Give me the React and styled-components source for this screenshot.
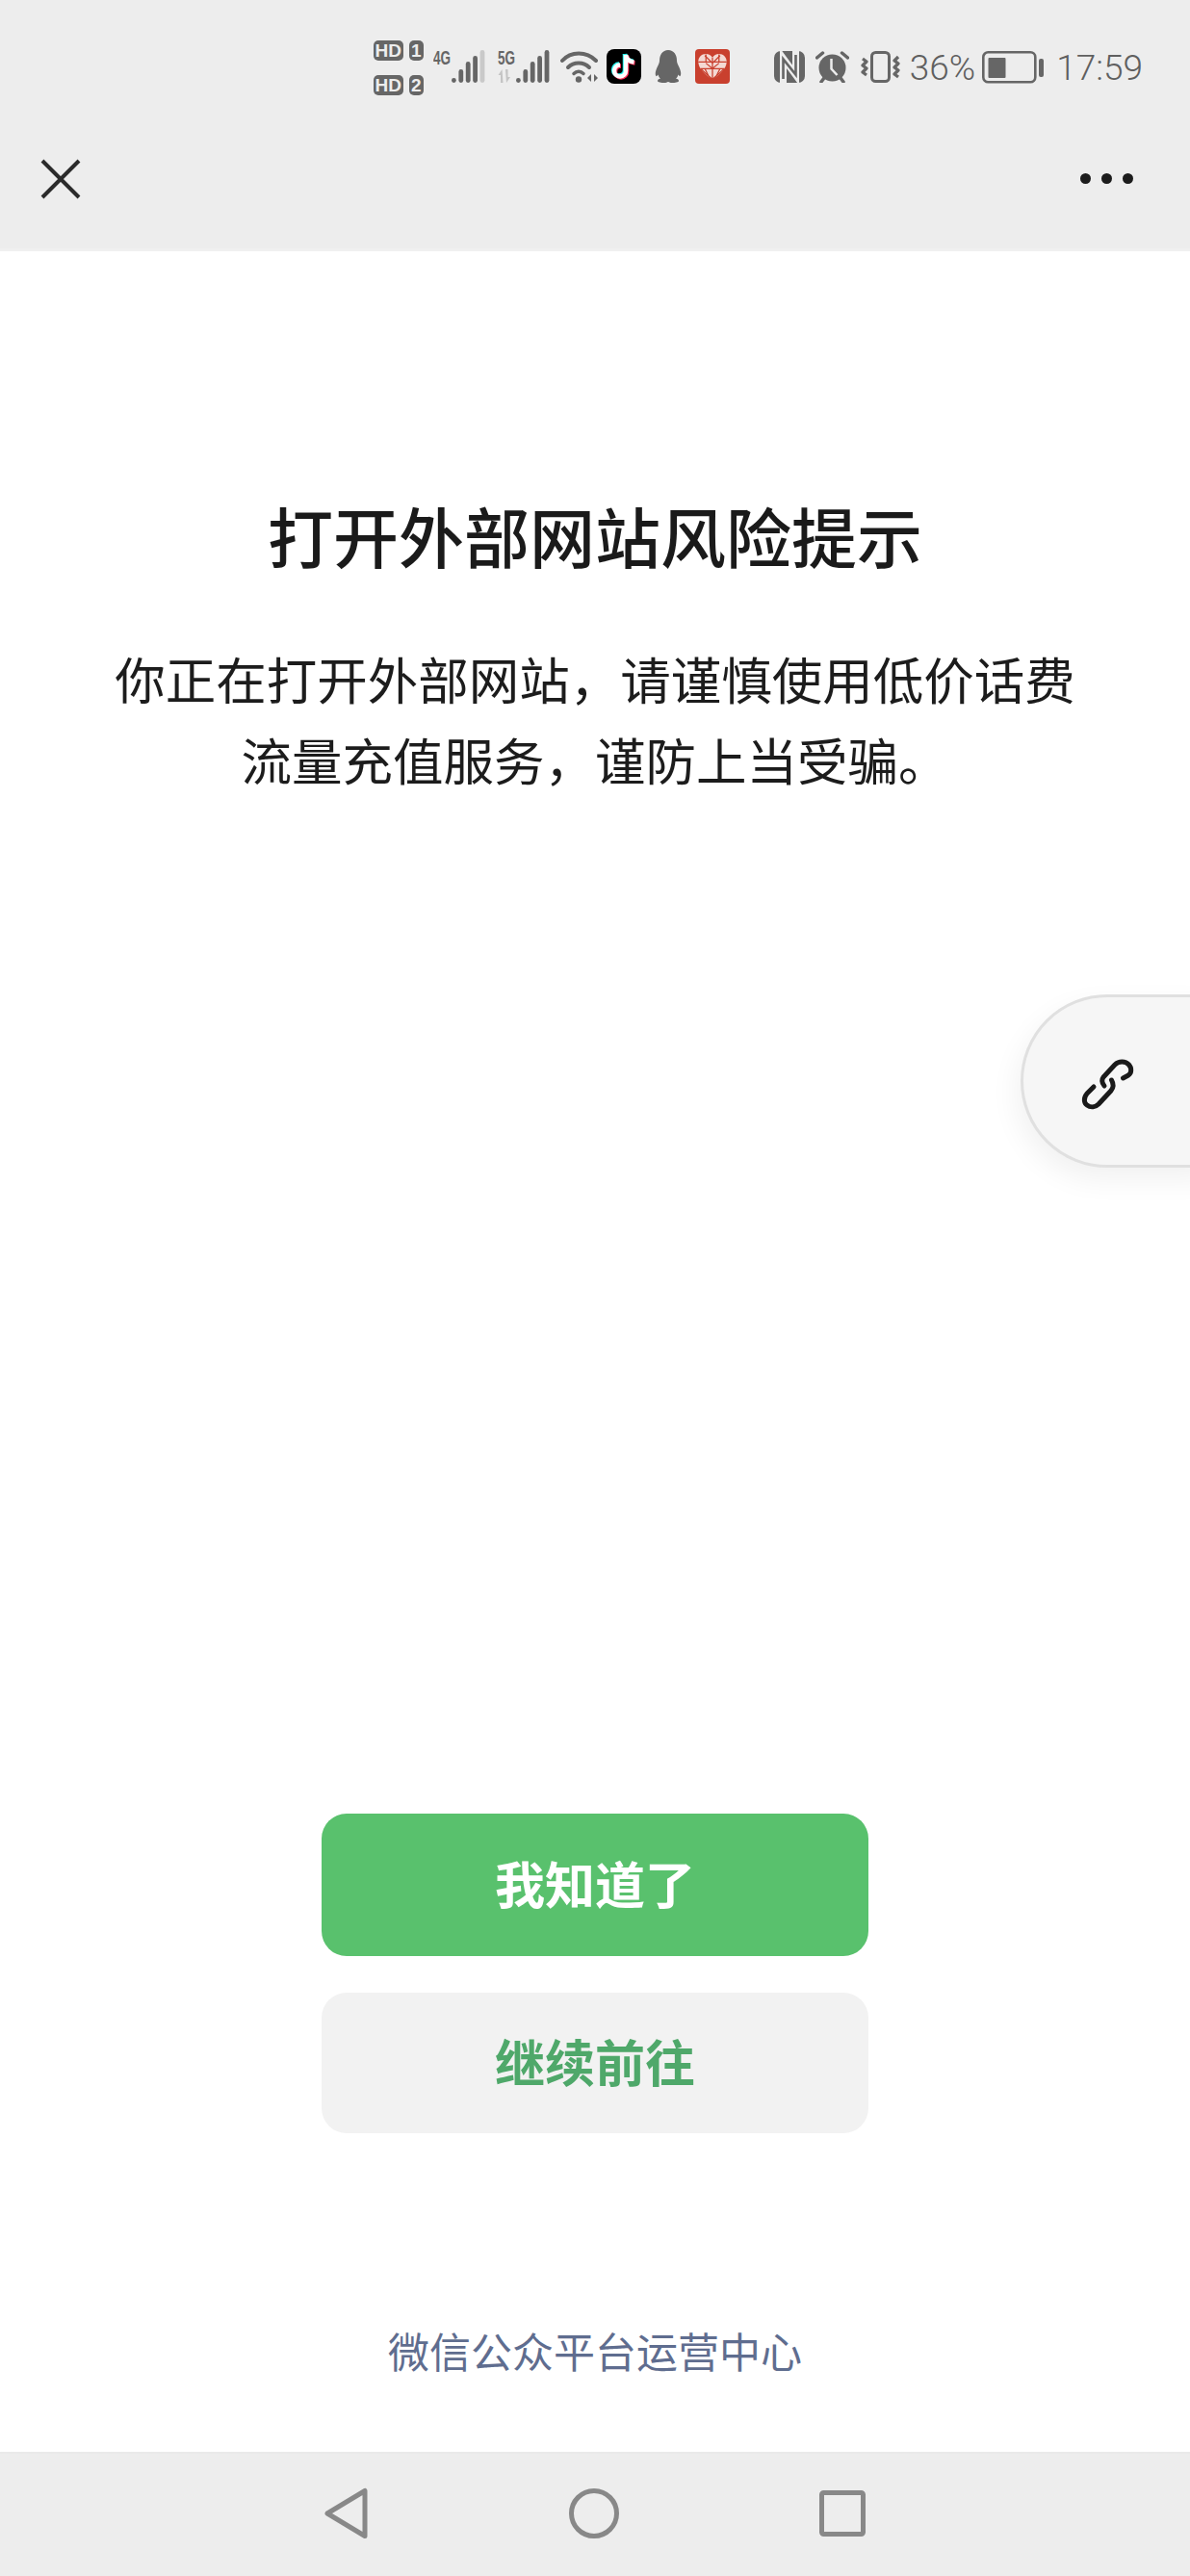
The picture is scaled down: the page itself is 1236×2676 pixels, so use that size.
import styled, { createGlobalStyle } from "styled-components";

const GlobalStyle = createGlobalStyle`
  html, body {
    margin: 0;
    padding: 0;
    background: #fff;
  }
  * {
    box-sizing: border-box;
  }
`;

const Page = styled.div`
  position: relative;
  width: 1236px;
  height: 2676px;
  display: flex;
  flex-direction: column;
  overflow: hidden;
  background: #fff;
  font-family: "Noto Sans CJK SC", "Noto Sans", sans-serif;
`;

const TopArea = styled.header`
  height: 261px;
  flex: none;
  display: flex;
  flex-direction: column;
  background: #ededed;
  border-bottom: 3px solid #f0f0f0;
`;

const StatusBar = styled.div`
  height: 100px;
  padding: 42px 49px 0 0;
  display: flex;
  justify-content: flex-end;
  align-items: flex-start;
  color: #5f5f5f;
`;

const StatusItem = styled.div`
  flex: none;
  display: flex;
  margin-left: ${(p) => p.$gap || 0}px;
  margin-top: ${(p) => p.$top || 0}px;
`;

const SimStack = styled.div`
  width: 52px;
  display: flex;
  flex-direction: column;
  gap: 15px;
`;

const SimRow = styled.div`
  display: flex;
  justify-content: space-between;
`;

const SimBadge = styled.span`
  height: 21px;
  width: ${(p) => p.$w}px;
  border-radius: 5px;
  background: #666;
  color: #ededed;
  font-family: "Liberation Sans", sans-serif;
  font-size: 19px;
  font-weight: 700;
  line-height: 21px;
  text-align: center;
`;

const StatusText = styled.span`
  font-family: Roboto, "Liberation Sans", sans-serif;
  font-size: 37px;
  font-weight: 300;
  line-height: 44px;
  margin-top: 7px;
  margin-left: ${(p) => p.$gap || 0}px;
  flex: none;
`;

const NavBar = styled.div`
  flex: 1;
  padding: 13px 59px 0 42px;
  display: flex;
  align-items: center;
  justify-content: space-between;
`;

const CloseButton = styled.svg`
  display: block;
`;

const MoreDots = styled.div`
  display: flex;
  gap: 11px;
`;

const Dot = styled.span`
  width: 11px;
  height: 11px;
  border-radius: 50%;
  background: #1c1c1c;
`;

const Main = styled.main`
  flex: 1;
  display: flex;
  flex-direction: column;
  align-items: center;
  padding: 250px 0 76px;
`;

const Title = styled.h1`
  margin: 0;
  font-size: 68px;
  font-weight: 500;
  line-height: 90px;
  color: #1a1a1a;
`;

const Message = styled.p`
  margin: 61px 0 0;
  width: 1010px;
  font-size: 52.5px;
  font-weight: 400;
  line-height: 84px;
  text-align: center;
  color: #1c1c1c;
`;

const Actions = styled.div`
  margin-top: auto;
  width: 568px;
  display: flex;
  flex-direction: column;
  gap: 38px;
`;

const ActionButton = styled.button`
  height: ${(p) => (p.$primary ? 148 : 146)}px;
  padding: 0 0 6px;
  border: 0;
  border-radius: 26px;
  background: ${(p) => (p.$primary ? "#59c16d" : "#f2f2f2")};
  color: ${(p) => (p.$primary ? "#fff" : "#4fa86a")};
  font-family: inherit;
  font-size: 52px;
  font-weight: 700;
`;

const Footer = styled.div`
  margin-top: 195px;
  font-size: 43px;
  line-height: 60px;
  color: #5f6d8f;
`;

const BottomBar = styled.nav`
  height: 129px;
  flex: none;
  padding-bottom: 4px;
  display: flex;
  justify-content: center;
  align-items: center;
  gap: 208px;
  background: #ededed;
  border-top: 2px solid #e9e9e9;
`;

const LinkTab = styled.div`
  position: absolute;
  top: 1033px;
  left: 1060px;
  width: 200px;
  height: 180px;
  display: flex;
  align-items: center;
  padding: 6px 0 0 58px;
  border: 3px solid #e0e0e0;
  border-radius: 90px 0 0 90px;
  background: #f6f6f6;
  box-shadow: -4px 12px 30px rgba(0, 0, 0, 0.06);
`;

function SignalBars({ x, last }) {
  const heights = [5, 14, 22, 28, 34];
  return heights.map((h, i) => (
    <rect
      key={i}
      x={x + i * 7.4}
      y={34 - h}
      width="4.8"
      height={h}
      rx="2.4"
      fill={i === 4 ? last : "#666"}
    />
  ));
}

function SignalIcon({ label, arrows, last }) {
  return (
    <svg width="54" height="40" viewBox="0 -6 54 40">
      <text
        x="0"
        y="15"
        textLength="18"
        lengthAdjust="spacingAndGlyphs"
        fontFamily="Liberation Sans, sans-serif"
        fontWeight="700"
        fontSize="20"
        fill="#666"
      >
        {label}
      </text>
      {arrows && (
        <path d="M4.500 20l-4 6H3v8h2.500zM9 34l4-6h-2.500v-8H8z" fill="#c4c4c4" />
      )}
      <SignalBars x={19} last={last} />
    </svg>
  );
}

function WifiIcon() {
  return (
    <svg width="40" height="34" viewBox="0 0 40 34">
      <g fill="none" stroke="#666" strokeWidth="4" strokeLinecap="round">
        <path d="M2 11C11 1 27 1 37 11" />
        <path d="M8 18c6-6 16-6 22 0" />
      </g>
      <path d="M14 24.500c3-3 7-3 10 0" fill="none" stroke="#666" strokeWidth="3.500" strokeLinecap="round" />
      <circle cx="19" cy="30.500" r="3.200" fill="#666" />
      <path d="M32 25v8l-4-4zM35 25v8l4-4z" fill="#666" />
    </svg>
  );
}

function TiktokIcon() {
  const layers = [
    ["#25f4ee", -1, -1],
    ["#fe2c55", 1, 1],
    ["#fff", 0, 0],
  ];
  return (
    <svg width="36" height="36" viewBox="0 0 36 36">
      <rect width="36" height="36" rx="8" fill="#000" />
      {layers.map(([color, dx, dy]) => (
        <g
          key={color}
          transform={`translate(${dx} ${dy})`}
          fill="none"
          stroke={color}
          strokeWidth="4.500"
        >
          <path d="M20 6v16.500a6 6 0 1 1-6-6" />
          <path d="M20 6c.4 4 3.500 7 8.500 7.500" />
        </g>
      ))}
    </svg>
  );
}

function QQIcon() {
  return (
    <svg width="28" height="34" viewBox="0 0 28 34">
      <path
        d="M14 0C20 0 23 5 23 11C23 13 24 15 25 17C27 21 28 25 26.500 27C26 27.500 25 26.500 24.500 25.500C24 27 23.500 28.500 22 29.500C24 30 25 31 25 32C25 33.500 21 34 18 34C16.500 34 15 33.500 14 33C13 33.500 11.500 34 10 34C7 34 3 33.500 3 32C3 31 4 30 6 29.500C4.500 28.500 4 27 3.500 25.500C3 26.500 2 27.500 1.500 27C0 25 1 21 3 17C4 15 5 13 5 11C5 5 8 0 14 0Z"
        fill="#666"
      />
    </svg>
  );
}

function PddIcon() {
  return (
    <svg width="36" height="36" viewBox="0 0 36 36">
      <rect width="36" height="36" rx="4" fill="#c9402e" />
      <g transform="translate(18 18) scale(1.130) translate(-18 -18)">
        <path
          d="M18 30C11 25 5 20 5 13.500C5 9.500 8 6.500 12 6.500C14.500 6.500 16.800 7.800 18 10C19.200 7.800 21.500 6.500 24 6.500C28 6.500 31 9.500 31 13.500C31 20 25 25 18 30Z"
          fill="#f4d9d3"
        />
        <g stroke="#c9402e" strokeWidth="1.100" fill="none">
          <path d="M18 10v20M5 14h26M7 20h22M11 8l7 7 7-7M7 20l11 10 11-10M12 15l6 5 6-5" />
          <path d="M12 7v7M24 7v7M11 20l3 6M25 20l-3 6" />
        </g>
      </g>
    </svg>
  );
}

function NfcIcon() {
  return (
    <svg width="32" height="33" viewBox="0 0 32 33">
      <rect width="32" height="33" rx="7" fill="#666" />
      <path d="M9.500 33V7.500L22.500 25V0" fill="none" stroke="#ededed" strokeWidth="7" />
      <path d="M9.500 29V8.500L22.500 24.500V4" fill="none" stroke="#666" strokeWidth="2.600" />
    </svg>
  );
}

function AlarmIcon() {
  return (
    <svg width="35" height="33" viewBox="0 0 35 33">
      <circle cx="17.500" cy="17.500" r="14" fill="#666" />
      <path d="M1.500 7l6-5M33.500 7l-6-5M6 32l3-4M29 32l-3-4" stroke="#666" strokeWidth="3.500" strokeLinecap="round" />
      <path d="M16.500 8v10.500l6 6.500" fill="none" stroke="#ededed" strokeWidth="2.500" />
    </svg>
  );
}

function VibrateIcon() {
  return (
    <svg width="41" height="33" viewBox="0 0 41 33">
      <rect x="11.500" y="1.500" width="18" height="30" rx="4" fill="none" stroke="#666" strokeWidth="3" />
      <g fill="none" stroke="#666" strokeWidth="3.200" strokeLinejoin="round">
        <path d="M2 8l4 3-4 4 4 3-4 4 4 3" />
        <path d="M39 6l-4 4 4 3-4 4 4 3-4 4 4 3" />
      </g>
    </svg>
  );
}

function BatteryIcon() {
  return (
    <svg width="64" height="34" viewBox="0 0 64 34">
      <rect x="1.300" y="1.300" width="54" height="31" rx="5" fill="none" stroke="#666" strokeWidth="2.600" />
      <rect x="6.500" y="7" width="18" height="21" rx="1" fill="#666" />
      <rect x="59" y="8" width="5" height="19" rx="2" fill="#666" />
    </svg>
  );
}

function ChainIcon() {
  return (
    <svg width="60" height="60" viewBox="0 0 60 60">
      <g fill="none" stroke="#1a1a1a" strokeWidth="5" strokeLinecap="round" strokeLinejoin="round">
        <path d="M26 32Q22 27 25 23L37 10C41 6 48 6 51.500 10C55 14 54 19 51 21L45.500 24" />
        <path d="M15 33L8 40C4 45 5 50 8 52C12 55 17 54 20 51L33 37Q37 32 33.500 26" />
      </g>
    </svg>
  );
}

function BackIcon() {
  return (
    <svg width="46" height="54" viewBox="0 0 46 54">
      <path d="M42 3.500V50.500L3 27Z" fill="none" stroke="#888" strokeWidth="5" strokeLinejoin="round" />
    </svg>
  );
}

function HomeIcon() {
  return (
    <svg width="52" height="54" viewBox="0 0 52 54">
      <circle cx="26" cy="27" r="23.500" fill="none" stroke="#888" strokeWidth="5" />
    </svg>
  );
}

function RecentIcon() {
  return (
    <svg width="48" height="48" viewBox="0 0 48 48">
      <rect x="2.500" y="2.500" width="43" height="43" rx="2" fill="none" stroke="#888" strokeWidth="5" />
    </svg>
  );
}

export default function App() {
  return (
    <>
      <GlobalStyle />
      <Page>
        <TopArea>
          <StatusBar>
            <SimStack>
              <SimRow>
                <SimBadge $w={31}>HD</SimBadge>
                <SimBadge $w={15}>1</SimBadge>
              </SimRow>
              <SimRow>
                <SimBadge $w={31}>HD</SimBadge>
                <SimBadge $w={15}>2</SimBadge>
              </SimRow>
            </SimStack>
            <StatusItem $gap={10} $top={4}>
              <SignalIcon label="4G" last="#c9c9c9" />
            </StatusItem>
            <StatusItem $gap={13} $top={4}>
              <SignalIcon label="5G" arrows last="#666" />
            </StatusItem>
            <StatusItem $gap={11} $top={10}>
              <WifiIcon />
            </StatusItem>
            <StatusItem $gap={8} $top={9}>
              <TiktokIcon />
            </StatusItem>
            <StatusItem $gap={14} $top={10}>
              <QQIcon />
            </StatusItem>
            <StatusItem $gap={14} $top={9}>
              <PddIcon />
            </StatusItem>
            <StatusItem $gap={46} $top={11}>
              <NfcIcon />
            </StatusItem>
            <StatusItem $gap={11} $top={11}>
              <AlarmIcon />
            </StatusItem>
            <StatusItem $gap={12} $top={11}>
              <VibrateIcon />
            </StatusItem>
            <StatusText $gap={10}>36%</StatusText>
            <StatusItem $gap={7} $top={11}>
              <BatteryIcon />
            </StatusItem>
            <StatusText $gap={13}>17:59</StatusText>
          </StatusBar>
          <NavBar>
            <CloseButton width="42" height="42" viewBox="0 0 42 42">
              <path d="M2 2L40 40M40 2L2 40" stroke="#2b2b2b" strokeWidth="4" />
            </CloseButton>
            <MoreDots>
              <Dot />
              <Dot />
              <Dot />
            </MoreDots>
          </NavBar>
        </TopArea>
        <Main>
          <Title>打开外部网站风险提示</Title>
          <Message>
            你正在打开外部网站，请谨慎使用低价话费流量充值服务，谨防上当受骗。
          </Message>
          <Actions>
            <ActionButton $primary>我知道了</ActionButton>
            <ActionButton>继续前往</ActionButton>
          </Actions>
          <Footer>微信公众平台运营中心</Footer>
        </Main>
        <BottomBar>
          <BackIcon />
          <HomeIcon />
          <RecentIcon />
        </BottomBar>
        <LinkTab>
          <ChainIcon />
        </LinkTab>
      </Page>
    </>
  );
}
